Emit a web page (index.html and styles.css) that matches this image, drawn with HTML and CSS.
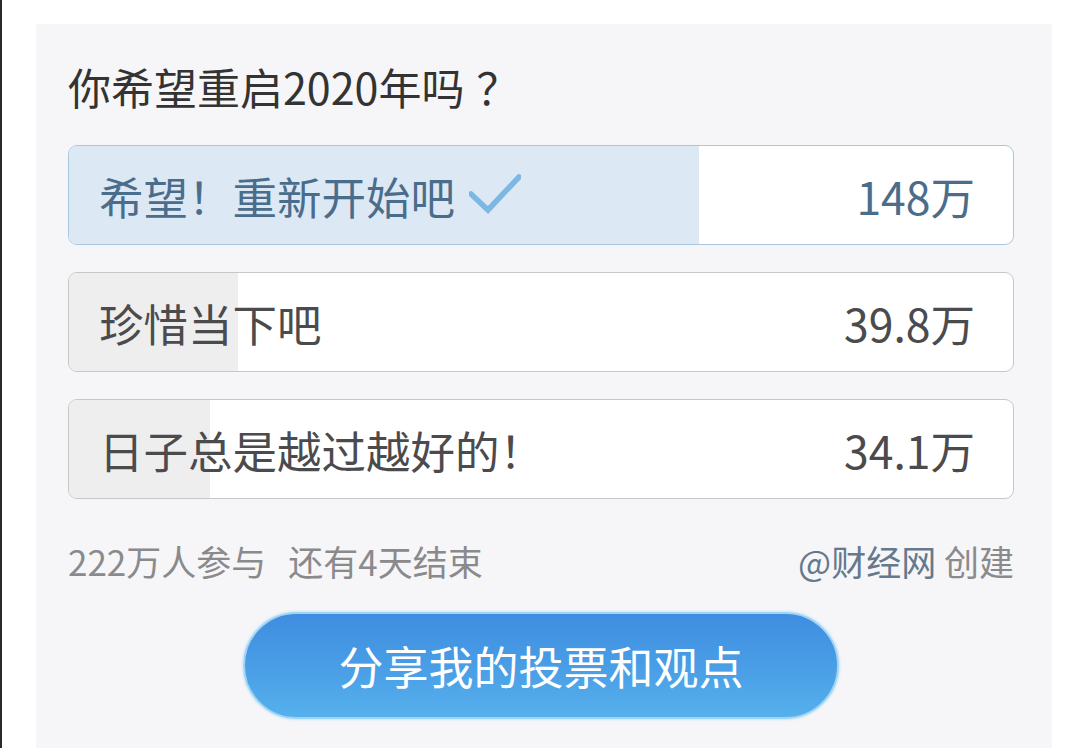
FILE: index.html
```html
<!DOCTYPE html>
<html lang="zh-CN">
<head>
<meta charset="utf-8">
<title>投票</title>
<link rel="stylesheet" href="styles.css">
</head>
<body>
<div class="page">
  <section class="card">
    <h1 class="title">你希望重启2020年吗<span class="q">？</span></h1>
    <ul class="options">
      <li class="option option--chosen">
        <div class="fill" style="width:66.7%"></div>
        <span class="label">希望！重新开始吧<svg class="check" width="52" height="40" viewBox="0 0 52 40"><path d="M2 20 L19 36 L50 3" fill="none" stroke="#7db7e4" stroke-width="5.5" stroke-linecap="round" stroke-linejoin="miter"/></svg></span>
        <span class="count">148万</span>
      </li>
      <li class="option">
        <div class="fill" style="width:17.9%"></div>
        <span class="label">珍惜当下吧</span>
        <span class="count">39.8万</span>
      </li>
      <li class="option">
        <div class="fill" style="width:14.9%"></div>
        <span class="label">日子总是越过越好的！</span>
        <span class="count">34.1万</span>
      </li>
    </ul>
    <div class="meta">
      <span class="stats"><span>222万人参与</span><span>还有4天结束</span></span>
      <span class="creator"><span class="author">@财经网</span> 创建</span>
    </div>
    <div class="actions">
      <button class="share">分享我的投票和观点</button>
    </div>
  </section>
</div>
</body>
</html>
```

FILE: styles.css
```css
* { box-sizing: border-box; }
html, body { margin: 0; padding: 0; background: #ffffff; }
body {
  font-family: "Noto Sans CJK SC", "Noto Sans", sans-serif;
  border-left: 2px solid #2a2a2a;
  height: 748px;
  overflow: hidden;
}
.page {
  padding: 24px 28px 0 34px;
}
.card {
  background: #f6f6f8;
  width: 1016px;
  height: 740px;
  padding: 37px 38px 0 32px;
}
.title {
  margin: 0;
  font-size: 43px;
  line-height: 50px;
  font-weight: 400;
  color: #333333;
}
.q { margin-left: 12px; }
.options {
  list-style: none;
  margin: 34px 0 0;
  padding: 0;
  display: flex;
  flex-direction: column;
  gap: 27px;
}
.option {
  position: relative;
  height: 100px;
  border: 1.5px solid #c7c7c9;
  border-radius: 9px;
  background: #ffffff;
  overflow: hidden;
  display: flex;
  align-items: center;
  justify-content: space-between;
  padding: 0 38px 0 30px;
  font-size: 44.5px;
  color: #4b4b4d;
}
.fill {
  position: absolute;
  left: 0; top: 0; bottom: 0;
  background: #eeeeef;
}
.option--chosen {
  border-color: #a9c8dd;
  color: #4b6d8c;
}
.option--chosen .fill { background: #dce8f4; }
.label, .count {
  position: relative;
  display: flex;
  align-items: center;
}
.check { margin-left: 14px; margin-top: -2px; }
.meta {
  margin-top: 40px;
  display: flex;
  justify-content: space-between;
  align-items: center;
  font-size: 35px;
  line-height: 44px;
  color: #8a8a8c;
}
.stats { display: flex; gap: 22px; }
.author { color: #64798d; }
.actions {
  display: flex;
  justify-content: center;
  margin-top: 29px;
}
.share {
  width: 596px;
  height: 107px;
  border: 2px solid #9fd4f6;
  border-radius: 54px;
  background: linear-gradient(180deg, #3f8de0 0%, #4a9fe6 55%, #56b0ec 100%);
  color: #ffffff;
  font-family: "Noto Sans CJK SC", "Noto Sans", sans-serif;
  font-size: 45px;
  padding: 0;
  box-shadow: 0 0 3px rgba(150, 210, 245, 0.9);
}
```
